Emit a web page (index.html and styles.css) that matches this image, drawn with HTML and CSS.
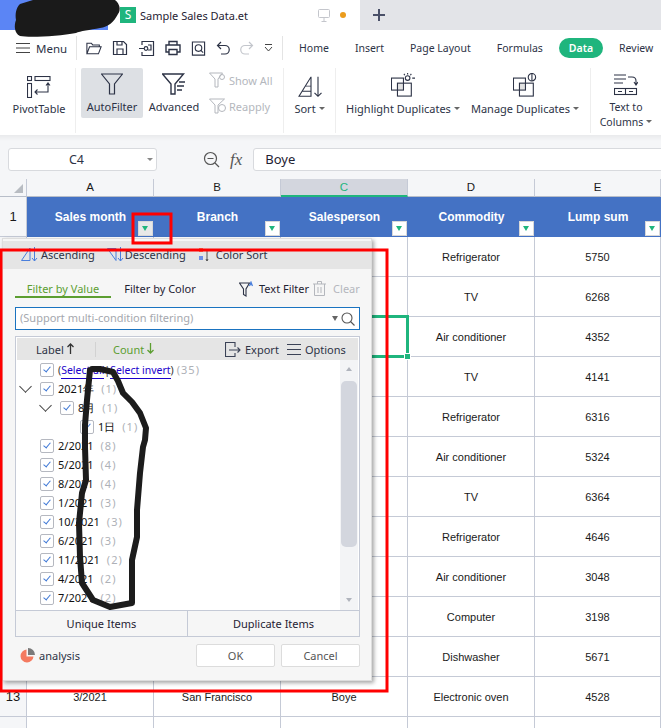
FILE: index.html
```html
<!DOCTYPE html>
<html lang="en">
<head>
    <meta charset="UTF-8">
    <meta name="viewport" content="width=device-width, initial-scale=1.0">
    <title>Sample Sales Data.et</title>
    <link rel="stylesheet" href="styles.css">
</head>
<body>
    <div class="titlebar">
        <div class="home-tab"></div>
        <div class="file-tab">
            <span class="file-logo">S</span>
            <span class="file-name">Sample Sales Data.et</span>
            <svg class="monitor-icon" width="14" height="14" viewBox="0 0 14 14" fill="none" stroke="#c4c6cc"><rect x="1.500" y="1.500" width="11" height="8" rx="1"/><path d="M7 9.500v3.500M4.500 13.500h5"/></svg>
            <span class="dot"></span>
        </div>
        <svg class="plus-icon" width="14" height="14" viewBox="0 0 14 14" stroke="#4a5068" stroke-width="2"><path d="M7 1v12M1 7h12"/></svg>
    </div>

    <div class="menu-row">
        <div class="menu-btn">
            <svg width="14" height="10" viewBox="0 0 14 10" stroke="#444"><path d="M0 .5h14M0 5h14M0 9.500h14"/></svg>
            <span>Menu</span>
        </div>
        <div class="quick-icons">
            <svg width="16" height="15" viewBox="0 0 18 16" fill="none" stroke="#2d3346" stroke-width="1.200"><path d="M1 14V2h5l1.500 2H15v2M1 14l3-8h13l-3 8z"/></svg>
            <svg width="16" height="16" viewBox="0 0 16 16" fill="none" stroke="#2d3346" stroke-width="1.200"><path d="M1.500 1.500h10l3 3v10h-13zM5 14.500V9h6v5.500M5 1.500V5h5V1.500"/></svg>
            <svg width="17" height="17" viewBox="0 0 17 17" fill="none" stroke="#2d3346" stroke-width="1.200"><path d="M4 5V1.500h11.500v14H4V12M1 8.500h5"/><circle cx="8" cy="8.500" r="1.800"/><path d="M10 5h3v5h-3"/></svg>
            <svg width="16" height="16" viewBox="0 0 16 16" fill="none" stroke="#2d3346" stroke-width="1.400"><path d="M4 5V1.500h8V5M4 12H1V5h14v7h-3M4 9.500h8v5H4z"/></svg>
            <svg width="15" height="17" viewBox="0 0 16 17" fill="none" stroke="#2d3346" stroke-width="1.200"><path d="M1.500 15.500V1.500h13v14z"/><circle cx="8" cy="8" r="3.500"/><path d="M10.500 10.500L13 13"/></svg>
            <svg width="14" height="14" viewBox="0 0 14 14" fill="none" stroke="#2d3346" stroke-width="1.200"><path d="M5 1L1.500 4.500 5 8M1.500 4.500H9a4 4 0 0 1 0 8.500H5"/></svg>
            <svg width="14" height="14" viewBox="0 0 14 14" fill="none" stroke="#c3c6cc" stroke-width="1.200"><path d="M9 1l3.500 3.500L9 8M12.500 4.500H5a4 4 0 0 0 0 8.500h4"/></svg>
            <svg width="9" height="8" viewBox="0 0 9 8" fill="none" stroke="#444"><path d="M1 .5h7M1 3l3.500 4L8 3"/></svg>
        </div>
        <nav class="tabs">
            <span>Home</span>
            <span>Insert</span>
            <span>Page Layout</span>
            <span>Formulas</span>
            <span class="tab-active">Data</span>
            <span>Review</span>
        </nav>
    </div>

    <div class="ribbon">
        <div class="rb-btn rb-pivot">
            <svg width="24" height="22" viewBox="0 0 24 22" fill="none" stroke="#2d3346" stroke-width="1.100"><rect x=".5" y=".5" width="4" height="4"/><rect x="8" y=".5" width="15" height="4"/><rect x=".5" y="7.500" width="4" height="14"/><path d="M8 16h13V7M19 9.500L21 7l2 2.500M10.500 13.500L8 16l2.500 2.500"/></svg>
            <span>PivotTable</span>
        </div>
        <div class="rb-sep"></div>
        <div class="rb-btn rb-auto">
            <svg width="22" height="22" viewBox="0 0 22 22" fill="none" stroke="#2d3346" stroke-width="1.200"><path d="M.5 1h21L13.500 11v10h-5V11z"/></svg>
            <span>AutoFilter</span>
        </div>
        <div class="rb-btn rb-adv">
            <svg width="24" height="22" viewBox="0 0 24 22" fill="none" stroke="#2d3346" stroke-width="1.400"><path d="M.5 1h21L13 11v10H9V11zM15 13h7M15 17h5M17 9h6"/></svg>
            <span>Advanced</span>
        </div>
        <div class="rb-small">
            <div class="rb-line">
                <svg width="20" height="16" viewBox="0 0 20 16" fill="none" stroke="#b4b7bd"><path d="M.5 1h13L9 7v8H6V7z"/><circle cx="13" cy="5" r="2.500"/></svg>
                <span>Show All</span>
            </div>
            <div class="rb-line">
                <svg width="20" height="16" viewBox="0 0 20 16" fill="none" stroke="#b4b7bd"><path d="M.5 1h15L9 7v8H6V7z"/><circle cx="13" cy="10" r="3.500"/></svg>
                <span>Reapply</span>
            </div>
        </div>
        <div class="rb-sep rb-sep-sort"></div>
        <div class="rb-btn rb-sort">
            <svg width="24" height="22" viewBox="0 0 24 26" preserveAspectRatio="none" fill="none" stroke="#2d3346" stroke-width="1.100"><path d="M1 24L13 1v23zM4 18h9M7 12h6M20 1v23M16.500 20l3.500 4 3.500-4"/></svg>
            <span class="caret">Sort</span>
        </div>
        <div class="rb-sep"></div>
        <div class="rb-btn rb-high">
            <svg width="24" height="24" viewBox="0 0 26 26" fill="none" stroke="#2d3346" stroke-width="1.200"><rect x="7" y="11" width="7" height="7" fill="#e2e2e2" stroke="none"/><rect x=".5" y="5.500" width="13" height="13"/><rect x="7" y="11" width="15" height="14"/><circle cx="18" cy="5.500" r="2.500"/><path d="M18 0v1.500M23 5.500h3M14 1l1 1.500M22 1l-1 1.500"/></svg>
            <span class="caret">Highlight Duplicates</span>
        </div>
        <div class="rb-btn rb-manage">
            <svg width="24" height="24" viewBox="0 0 26 26" fill="none" stroke="#2d3346" stroke-width="1.200"><rect x="7" y="11" width="7" height="7" fill="#e2e2e2" stroke="none"/><rect x=".5" y="5.500" width="13" height="13"/><rect x="7" y="11" width="15" height="14"/><circle cx="20.500" cy="4.500" r="4"/><path d="M20.500 1v7"/></svg>
            <span class="caret">Manage Duplicates</span>
        </div>
        <div class="rb-sep rb-sep-text"></div>
        <div class="rb-btn rb-text">
            <svg width="24" height="22" viewBox="0 0 24 22" fill="none" stroke="#2d3346" stroke-width="1.100"><path d="M0 1h12M0 5h12M0 9h9M14 3h4q4 0 4 4v3M20 8l2 3 2-3"/><rect x=".5" y="14.500" width="22" height="6"/><path d="M11.500 14.500v6M4 17.500h4M15 17.500h4"/></svg>
            <span>Text to<br><span class="caret">Columns</span></span>
        </div>
    </div>

    <div class="formula-bar">
        <div class="name-box">C4<span class="name-arrow"></span></div>
        <svg class="zoom-icon" width="17" height="17" viewBox="0 0 17 17" fill="none" stroke="#555" stroke-width="1.200"><circle cx="7.500" cy="7.500" r="6"/><path d="M4.500 7.500h6M12 12l4 4"/></svg>
        <span class="fx">fx</span>
        <div class="formula-input">Boye</div>
    </div>

    <div class="sheet">
        <div class="corner"><span class="corner-mark"></span></div>
        <div class="col-head">A</div>
        <div class="col-head">B</div>
        <div class="col-head col-sel">C</div>
        <div class="col-head">D</div>
        <div class="col-head">E</div>

        <div class="row-head">1</div>
        <div class="head-cell">Sales month<span class="drop drop-on"></span></div>
        <div class="head-cell">Branch<span class="drop"></span></div>
        <div class="head-cell">Salesperson<span class="drop"></span></div>
        <div class="head-cell">Commodity<span class="drop"></span></div>
        <div class="head-cell">Lump sum<span class="drop"></span></div>

        <div class="row-head">2</div><div class="cell"></div><div class="cell"></div><div class="cell"></div><div class="cell">Refrigerator</div><div class="cell">5750</div>
        <div class="row-head">3</div><div class="cell"></div><div class="cell"></div><div class="cell"></div><div class="cell">TV</div><div class="cell">6268</div>
        <div class="row-head">4</div><div class="cell"></div><div class="cell"></div><div class="cell cell-sel"><span class="sel-handle"></span></div><div class="cell">Air conditioner</div><div class="cell">4352</div>
        <div class="row-head">5</div><div class="cell"></div><div class="cell"></div><div class="cell"></div><div class="cell">TV</div><div class="cell">4141</div>
        <div class="row-head">6</div><div class="cell"></div><div class="cell"></div><div class="cell"></div><div class="cell">Refrigerator</div><div class="cell">6316</div>
        <div class="row-head">7</div><div class="cell"></div><div class="cell"></div><div class="cell"></div><div class="cell">Air conditioner</div><div class="cell">5324</div>
        <div class="row-head">8</div><div class="cell"></div><div class="cell"></div><div class="cell"></div><div class="cell">TV</div><div class="cell">6364</div>
        <div class="row-head">9</div><div class="cell"></div><div class="cell"></div><div class="cell"></div><div class="cell">Refrigerator</div><div class="cell">4646</div>
        <div class="row-head">10</div><div class="cell"></div><div class="cell"></div><div class="cell"></div><div class="cell">Air conditioner</div><div class="cell">3048</div>
        <div class="row-head">11</div><div class="cell"></div><div class="cell"></div><div class="cell"></div><div class="cell">Computer</div><div class="cell">3198</div>
        <div class="row-head">12</div><div class="cell"></div><div class="cell"></div><div class="cell"></div><div class="cell">Dishwasher</div><div class="cell">5671</div>
        <div class="row-head">13</div><div class="cell">3/2021</div><div class="cell">San Francisco</div><div class="cell">Boye</div><div class="cell">Electronic oven</div><div class="cell">4528</div>
        <div class="row-head"></div><div class="cell"></div><div class="cell"></div><div class="cell"></div><div class="cell"></div><div class="cell"></div>
    </div>

    <div class="popup">
        <div class="sort-bar">
            <span class="sort-item">
                <svg width="17" height="15" viewBox="0 0 17 15" fill="none" stroke="#4a7fdc"><path d="M.5 13.500L9 1v12.500zM13.500 0v14M11 11l2.500 3 2.500-3"/></svg>
                Ascending
            </span>
            <span class="sort-item">
                <svg width="17" height="15" viewBox="0 0 17 15" fill="none" stroke="#4a7fdc"><path d="M.5 1.500L9 13.500V1.500zM13.500 0v14M11 11l2.500 3 2.500-3"/></svg>
                Descending
            </span>
            <span class="sort-item">
                <svg width="11" height="15" viewBox="0 0 11 15"><rect x="0" y="1" width="4" height="4" fill="#f4765a"/><rect x="0" y="9" width="4" height="4" fill="#6d8fe6"/><path d="M8 4v10M7 12l1 2 1-2" fill="none" stroke="#555"/></svg>
                Color Sort
            </span>
        </div>

        <div class="filter-tabs">
            <span class="filter-tab filter-on">Filter by Value</span>
            <span class="filter-tab">Filter by Color</span>
            <span class="text-filter">
                <svg width="15" height="16" viewBox="0 0 15 16" fill="none" stroke="#2d3346" stroke-width="1.100"><path d="M.5 2h10L7 8v7l-2.500-1.500V8z"/><path d="M10.500 5l1.500-4 1.500 4M11 3.800h2" stroke="#4a7fdc"/></svg>
                Text Filter
            </span>
            <span class="clear-filter">
                <svg width="13" height="15" viewBox="0 0 13 15" fill="none" stroke="#b4b7bd"><path d="M0 3h13M4.500 3V.5h4V3M1.500 3v11.500h10V3M5 6v6M8 6v6"/></svg>
                Clear
            </span>
        </div>

        <div class="search-box">
            <span>(Support multi-condition filtering)</span>
            <span class="search-arrow"></span>
            <svg width="14" height="14" viewBox="0 0 14 14" fill="none" stroke="#555" stroke-width="1.100"><circle cx="6" cy="6" r="5"/><path d="M9.500 9.500L13.500 13.500"/></svg>
        </div>

        <div class="list-box">
            <div class="list-head">
                <span class="lh-label">Label <svg width="7" height="11" viewBox="0 0 7 11" fill="none" stroke="#333" stroke-width="1.300"><path d="M3.500 11V1M.5 4l3-3 3 3"/></svg></span>
                <span class="lh-count">Count <svg width="7" height="11" viewBox="0 0 7 11" fill="none" stroke="#5c9e31" stroke-width="1.300"><path d="M3.500 0v10M.5 7l3 3 3-3"/></svg></span>
                <span class="lh-action">
                    <svg width="16" height="15" viewBox="0 0 16 15" fill="none" stroke="#3b4256" stroke-width="1.100"><path d="M10 5V.5H.5v14H10V11M4 8h11M12.500 5.500L15 8l-2.500 2.500"/></svg>
                    Export
                </span>
                <span class="lh-action">
                    <svg width="14" height="11" viewBox="0 0 14 11" stroke="#3b4256"><path d="M0 .5h14M0 5.500h14M0 10.500h14"/></svg>
                    Options
                </span>
            </div>
            <div class="list-body">
                <ul class="tree">
                    <li class="lvl1"><span class="check"></span><span class="select-links">(<a>Select all</a>|<a>Select invert</a>)</span><span class="num num-all">(35)</span></li>
                    <li class="lvl1"><span class="chevron"></span><span class="check"></span>2021年<span class="num">(1)</span></li>
                    <li class="lvl2"><span class="chevron"></span><span class="check"></span>8月<span class="num">(1)</span></li>
                    <li class="lvl3"><span class="check"></span>1日<span class="num">(1)</span></li>
                    <li class="lvl1"><span class="check"></span>2/2021<span class="num">(8)</span></li>
                    <li class="lvl1"><span class="check"></span>5/2021<span class="num">(4)</span></li>
                    <li class="lvl1"><span class="check"></span>8/2021<span class="num">(4)</span></li>
                    <li class="lvl1"><span class="check"></span>1/2021<span class="num">(3)</span></li>
                    <li class="lvl1"><span class="check"></span>10/2021<span class="num">(3)</span></li>
                    <li class="lvl1"><span class="check"></span>6/2021<span class="num">(3)</span></li>
                    <li class="lvl1"><span class="check"></span>11/2021<span class="num">(2)</span></li>
                    <li class="lvl1"><span class="check"></span>4/2021<span class="num">(2)</span></li>
                    <li class="lvl1"><span class="check"></span>7/2021<span class="num">(2)</span></li>
                </ul>
                <div class="scrollbar">
                    <span class="sb-up"></span>
                    <span class="sb-thumb"></span>
                    <span class="sb-down"></span>
                </div>
            </div>
            <div class="list-foot">
                <span>Unique Items</span>
                <span>Duplicate Items</span>
            </div>
        </div>

        <div class="popup-foot">
            <span class="analysis">
                <svg width="15" height="15" viewBox="0 0 15 15"><path d="M6.500 1.500a6.500 6.500 0 1 0 7 7h-7z" fill="#f47a60"/><path d="M8 0a7 7 0 0 1 7 7H8z" fill="#7a7a7a"/></svg>
                analysis
            </span>
            <span class="foot-btn">OK</span>
            <span class="foot-btn">Cancel</span>
        </div>
    </div>

    <!-- marks drawn over the screenshot -->
    <svg class="marks" width="661" height="728" viewBox="0 0 661 728" fill="none">
        <path d="M20 4L33 0L115 0C120 4 121 10 118 14C114 22 108 27 100 28C90 30 80 31 76 33C60 36 30 38 20 36C14 33 14 25 16 20C15 14 16 8 20 4Z" fill="#1a1a1a"/>
        <rect x="133" y="214" width="38" height="29" stroke="#f00" stroke-width="3"/>
        <rect x="1" y="250" width="386" height="441" stroke="#f00" stroke-width="3"/>
        <path d="M92 369L100 369L113 372L118 381L123 393L132 402L140 413L146 428L145 440L143 447L140 473L137 510L137 537L132 560L132 585L132 603L110 607L93 600L82 583L80 557L79 523L82 493L86 480L85 447L85 425L87 400L90 370" stroke="#1c1c1c" stroke-width="6" stroke-linejoin="round" stroke-linecap="round"/>
    </svg>
</body>
</html>
```

FILE: styles.css
```css
html, body {
    margin: 0;
    height: 728px;
    overflow: hidden;
}

body {
    position: relative;
    background: #ffffff;
    font-family: "Noto Sans", sans-serif;
    font-size: 11px;
    color: #2d3346;
}

/* title bar */
.titlebar {
    display: flex;
    align-items: center;
    height: 30px;
    background: #e3e4e8;
}

.home-tab {
    width: 108px;
    height: 30px;
    background: #5b85f5;
}

.file-tab {
    display: flex;
    align-items: center;
    width: 252px;
    height: 30px;
    background: #ffffff;
    padding-left: 12px;
    box-sizing: border-box;
}

.file-logo {
    width: 16px;
    height: 16px;
    background: #1fb57d;
    color: #ffffff;
    font-size: 12px;
    line-height: 16px;
    text-align: center;
}

.file-name {
    margin-left: 4px;
    font-size: 11px;
    color: #1f2233;
}

.monitor-icon {
    margin-left: 69px;
}

.dot {
    width: 6px;
    height: 6px;
    margin-left: 9px;
    border-radius: 50%;
    background: #eb9c1c;
}

.plus-icon {
    margin-left: 12px;
}

/* menu row */
.menu-row {
    display: flex;
    align-items: center;
    height: 36px;
}

.menu-btn {
    display: flex;
    align-items: center;
    flex-shrink: 0;
    gap: 6px;
    width: 60px;
    height: 24px;
    padding-left: 16px;
    border-right: 1px solid #e4e4e4;
    font-size: 11.500px;
}

.quick-icons {
    display: flex;
    align-items: center;
    flex-shrink: 0;
    justify-content: space-between;
    width: 187px;
    height: 24px;
    padding: 0 9px;
    border-right: 1px solid #e4e4e4;
}

.tabs {
    display: flex;
    align-items: center;
    gap: 26px;
    margin-left: 16px;
    font-size: 10.500px;
    white-space: nowrap;
}

.tab-active {
    margin: 0 -10px;
    padding: 0 10px;
    line-height: 20px;
    border-radius: 10px;
    background: #1fb57d;
    color: #ffffff;
    font-weight: 600;
}

/* ribbon */
.ribbon {
    display: flex;
    height: 69px;
    box-sizing: border-box;
    padding-top: 2px;
    white-space: nowrap;
}

.rb-btn {
    display: flex;
    flex-direction: column;
    align-items: center;
    box-sizing: border-box;
    padding-top: 8px;
    height: 50px;
    flex-shrink: 0;
}

.rb-btn svg {
    flex-shrink: 0;
    margin-bottom: 4px;
}

.rb-sep {
    width: 1px;
    height: 65px;
    background: #eeeeee;
    flex-shrink: 0;
}

.rb-pivot { width: 75px; padding-left: 3px; }
.rb-pivot svg, .rb-sort svg { margin-bottom: 3px; }
.rb-auto { width: 62px; margin-left: 5px; background: #dde0e4; border-radius: 2px; padding-top: 5px; }
.rb-adv { width: 62px; padding-top: 5px; }
.rb-sort { width: 51px; }
.rb-high { width: 134px; padding-top: 5px; }
.rb-manage { width: 110px; padding-top: 5px; }
.rb-text { width: 70px; padding-top: 6px; font-size: 10.500px; line-height: 14.500px; text-align: center; }
.rb-sep-sort { margin-left: 4px; }
.rb-sep-text { margin-left: 10px; }

.rb-small {
    display: flex;
    flex-direction: column;
    gap: 8px;
    width: 70px;
    margin-left: 4px;
    padding-top: 3px;
    color: #b4b7bd;
}

.rb-line {
    display: flex;
    align-items: center;
    height: 18px;
}

.caret::after {
    content: "";
    display: inline-block;
    margin-left: 3px;
    vertical-align: 3px;
    border: 3px solid transparent;
    border-top-color: #666666;
    border-bottom: 0;
}

/* formula bar */
.formula-bar {
    display: flex;
    align-items: center;
    box-sizing: border-box;
    height: 44px;
    padding: 13px 0 8px 8px;
    background: linear-gradient(#e9eaec, #f5f6f8 6px);
}

.name-box, .formula-input {
    height: 23px;
    line-height: 21px;
    background: #ffffff;
    border: 1px solid #d8dade;
    box-sizing: border-box;
}

.name-box {
    position: relative;
    width: 149px;
    flex-shrink: 0;
    padding-right: 12px;
    border-radius: 3px;
    text-align: center;
    font-size: 12.500px;
}

.name-arrow {
    position: absolute;
    right: 3px;
    top: 9px;
    border: 3px solid transparent;
    border-top-color: #888888;
    border-bottom: 0;
}

.zoom-icon {
    margin-left: 46px;
    flex-shrink: 0;
}

.fx {
    margin-left: 10px;
    font-family: "Liberation Serif", serif;
    font-style: italic;
    font-size: 17px;
    color: #555555;
}

.formula-input {
    flex: 1;
    margin-left: 11px;
    margin-right: -4px;
    padding-left: 11px;
    border-radius: 3px 0 0 3px;
    font-size: 13px;
    color: #1f2233;
}

/* sheet */
.sheet {
    display: grid;
    grid-template-columns: 27px 127px 127px 127px 127px 126px;
    grid-template-rows: 18px repeat(14, 40px);
    font-family: "Liberation Sans", sans-serif;
    font-size: 11px;
    color: #1a1a1a;
}

.corner, .col-head, .row-head {
    background: #f5f6f8;
    border-bottom: 1px solid #b8bec9;
    box-sizing: border-box;
}

.corner {
    display: flex;
    justify-content: flex-end;
    align-items: flex-end;
    padding: 0 3px 3px 0;
    border-right: 1px solid #c5cad6;
}

.corner-mark {
    width: 0;
    height: 0;
    border-left: 9px solid transparent;
    border-bottom: 9px solid #b8bcc2;
}

.col-head {
    text-align: center;
    line-height: 17px;
    font-size: 11.500px;
    border-right: 1px solid #c5cad6;
}

.col-sel {
    background: #d3d6de;
    color: #1fb57d;
    border-bottom: 2px solid #1fb57d;
}

.row-head {
    display: flex;
    align-items: center;
    justify-content: center;
    font-size: 13px;
    border-right: 1px solid #c5cad6;
    border-bottom: 1px solid #c5cad6;
}

.head-cell {
    position: relative;
    display: flex;
    align-items: center;
    justify-content: center;
    box-sizing: border-box;
    padding-bottom: 1px;
    background: #4472c4;
    color: #ffffff;
    font-weight: bold;
    font-size: 12px;
}

.drop {
    position: absolute;
    right: 1px;
    bottom: 1px;
    width: 15px;
    height: 15px;
    background: #ffffff;
    border: 1px solid #d8d8d8;
    box-sizing: border-box;
}

.drop::after {
    content: "";
    position: absolute;
    left: 3px;
    top: 4px;
    border: 3.500px solid transparent;
    border-top: 5px solid #1fb57d;
    border-bottom: 0;
}

.drop-on {
    background: #e8e8e8;
}

.cell {
    display: flex;
    align-items: center;
    justify-content: center;
    box-sizing: border-box;
    border-right: 1px solid #c5cad6;
    border-bottom: 1px solid #c5cad6;
}

.cell-sel {
    position: relative;
}

.cell-sel::after {
    content: "";
    position: absolute;
    top: -2px;
    left: -2px;
    right: -2px;
    bottom: -2px;
    border: 3px solid #1fb57d;
}

.sel-handle {
    position: absolute;
    right: -3px;
    bottom: -3px;
    width: 5px;
    height: 5px;
    z-index: 1;
    background: #1fb57d;
    outline: 1px solid #ffffff;
}

/* filter popup */
.popup {
    position: absolute;
    left: 2px;
    top: 238px;
    width: 370px;
    height: 443px;
    box-sizing: border-box;
    padding: 2px 0 0;
    background: #f6f6f6;
    border: 1px solid #dddddd;
    box-shadow: 2px 2px 4px rgba(0, 0, 0, 0.35);
    color: #2d3346;
}

.sort-bar {
    display: flex;
    align-items: center;
    gap: 12px;
    box-sizing: border-box;
    height: 28px;
    padding: 0 0 1px 18px;
    background: #e5e5e5;
}

.sort-item {
    display: flex;
    align-items: center;
    gap: 3px;
}

.sort-item:nth-child(2) {
    gap: 1px;
}

.sort-item:last-child {
    gap: 6px;
    margin-left: 1px;
}

.filter-tabs {
    display: flex;
    align-items: center;
    margin-top: 12px;
    padding-left: 12px;
}

.filter-tab {
    width: 96px;
    line-height: 15px;
    text-align: center;
    border-bottom: 2px solid transparent;
    color: #1f2233;
}

.filter-on {
    color: #5c9e31;
    border-bottom-color: #5c9e31;
}

.filter-tabs .filter-tab + .filter-tab {
    margin-left: 1px;
}

.text-filter, .clear-filter {
    display: flex;
    align-items: center;
    margin-top: -2px;
}

.text-filter {
    gap: 5px;
    margin-left: 31px;
    color: #1f2233;
}

.clear-filter {
    gap: 7px;
    margin-left: 4px;
    color: #b4b7bd;
}

.search-box {
    display: flex;
    align-items: center;
    height: 23px;
    margin: 9px 11px 0 12px;
    padding: 0 4px;
    box-sizing: border-box;
    background: #ffffff;
    border: 1px solid #1a73c0;
    color: #a5a8ae;
}

.search-box span:first-child {
    flex: 1;
    margin-top: -2px;
}

.search-arrow {
    margin-right: 3px;
    border: 3px solid transparent;
    border-top: 5px solid #666666;
    border-bottom: 0;
}

.list-box {
    margin: 6px 11px 0 12px;
    border: 1px solid #c5cad6;
    background: #ffffff;
}

.list-head {
    display: flex;
    align-items: center;
    height: 22px;
    margin: 1px 1px 0;
    background: #e5e5e5;
    white-space: nowrap;
}

.lh-label {
    width: 79px;
    box-sizing: border-box;
    padding-left: 19px;
    border-right: 1px solid #d2d2d2;
}

.lh-count {
    width: 129px;
    box-sizing: border-box;
    padding-left: 17px;
    color: #5c9e31;
}

.lh-action {
    display: flex;
    align-items: center;
    gap: 4px;
    margin-right: 8px;
}

.list-body {
    display: flex;
    height: 250px;
    overflow: hidden;
}

.tree {
    flex: 1;
    margin: 0;
    padding: 0;
    list-style: none;
    color: #111111;
}

.tree li {
    display: flex;
    align-items: center;
    height: 19px;
    white-space: nowrap;
}

.lvl1 { padding-left: 24px; }
.lvl2 { padding-left: 44px; }
.lvl3 { padding-left: 64px; }

.check {
    position: relative;
    width: 14px;
    height: 14px;
    margin-right: 4px;
    box-sizing: border-box;
    border: 1px solid #b5b8c0;
    border-radius: 2px;
    background: #ffffff;
    flex-shrink: 0;
}

.check::after {
    content: "";
    position: absolute;
    left: 4px;
    top: 1.500px;
    width: 3px;
    height: 6px;
    border: solid #3f78d6;
    border-width: 0 1.500px 1.500px 0;
    transform: rotate(40deg);
}

.chevron {
    width: 9px;
    height: 9px;
    margin: -5px 10px 0 -19px;
    box-sizing: border-box;
    border: solid #444444;
    border-width: 0 1px 1px 0;
    transform: rotate(45deg);
}

.num {
    margin-left: 7px;
    letter-spacing: 1px;
    color: #aeb1b7;
}

.num-all {
    margin-left: 3px;
}

.select-links {
    font-size: 10.500px;
    color: #333333;
}

.select-links a {
    color: #1a00cc;
    padding-bottom: 1px;
    border-bottom: 1px solid #1a00cc;
}

.scrollbar {
    display: flex;
    flex-direction: column;
    align-items: center;
    width: 18px;
    margin-right: 1px;
    background: #f3f4f6;
}

.sb-up, .sb-down {
    height: 0;
    border: 3px solid transparent;
}

.sb-up {
    margin: 7px 0 10px;
    border-bottom: 4px solid #b0b4bd;
    border-top: 0;
}

.sb-thumb {
    width: 16px;
    height: 166px;
    border-radius: 5px;
    background: #d3d6de;
}

.sb-down {
    margin-top: auto;
    margin-bottom: 8px;
    border-top: 4px solid #b0b4bd;
    border-bottom: 0;
}

.list-foot {
    display: grid;
    grid-template-columns: 171px 1fr;
    height: 25px;
    line-height: 26px;
    text-align: center;
    background: #f6f6f6;
    border-top: 1px solid #c5cad6;
    color: #1f2233;
}

.list-foot span + span {
    border-left: 1px solid #c5cad6;
}

.popup-foot {
    display: flex;
    align-items: center;
    gap: 6px;
    margin: 7px 11px 0 17px;
}

.analysis {
    display: flex;
    align-items: center;
    gap: 4px;
    margin-right: auto;
}

.foot-btn {
    width: 79px;
    height: 23px;
    line-height: 21px;
    box-sizing: border-box;
    text-align: center;
    background: #ffffff;
    border: 1px solid #dcdcdc;
    border-radius: 2px;
    color: #555555;
}

/* red boxes and scribbles */
.marks {
    position: absolute;
    left: 0;
    top: 0;
    pointer-events: none;
}
```
